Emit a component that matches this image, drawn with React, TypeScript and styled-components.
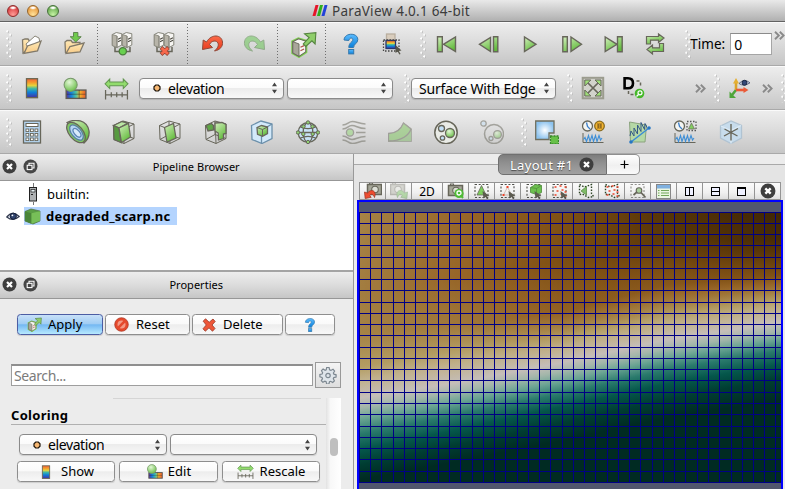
import React from 'react';
import styled, { createGlobalStyle, css } from 'styled-components';

const Global = createGlobalStyle`
  html, body { margin: 0; padding: 0; overflow: hidden; }
  body { font-family: "Noto Sans", "Open Sans", sans-serif; color: #000; }
  * { box-sizing: border-box; }
  svg { display: block; flex: none; }
`;

/* ---------- window frame ---------- */

const Window = styled.div`
  width: 785px; height: 489px; overflow: hidden;
  display: flex; flex-direction: column; background: #ececec;
`;
const TitleBar = styled.header`
  flex: none; height: 22px; display: flex; align-items: center; position: relative;
  background: linear-gradient(#e9e9e9, #cfcfcf 45%, #b0b0b0);
  border-bottom: 1px solid #626262; padding-left: 7px; gap: 8px;
`;
const Light = styled.i<{ $rim: string; $top: string; $low: string }>`
  width: 12px; height: 12px; border-radius: 50%;
  border: 1px solid ${p => p.$rim};
  background: radial-gradient(ellipse 4px 2px at 50% 18%, #fff 30%, transparent),
    radial-gradient(circle at 50% 85%, ${p => p.$low}, ${p => p.$top} 75%);
`;
const Title = styled.div`
  margin-left: 245px; display: flex; align-items: center; gap: 4px;
  font-size: 13.5px; line-height: 20px; color: #3c3c3c; white-space: nowrap; letter-spacing: 0.28px;
`;
const ToolBar = styled.div<{ $pad: number }>`
  flex: none; height: 44px; display: flex; align-items: center; padding-left: ${p => p.$pad}px;
  background: linear-gradient(#ededed, #dedede 40%, #c6c6c6);
  border-top: 1px solid #fafafa; border-bottom: 1px solid #a9a9a9; overflow: hidden;
`;
const Handle = styled.i<{ $before?: number; $after?: number }>`
  flex: none; width: 6px; height: 29px;
  margin-left: ${p => p.$before ?? 0}px; margin-right: ${p => p.$after ?? 0}px;
  background:
    radial-gradient(circle at 1.3px 1.3px, #fff .8px, transparent 1.3px) 0 0 / 6px 7.2px,
    radial-gradient(circle at 2px 2px, #bcbcbc .8px, transparent 1.4px) 0 0 / 6px 7.2px,
    radial-gradient(circle at 4.3px 4.9px, #fff .8px, transparent 1.3px) 0 0 / 6px 7.2px,
    radial-gradient(circle at 5px 5.6px, #bcbcbc .8px, transparent 1.4px) 0 0 / 6px 7.2px;
`;
const Divider = styled.i<{ $before: number; $after: number }>`
  flex: none; width: 1px; height: 41px; margin: 0 ${p => p.$after}px 0 ${p => p.$before}px;
  background: repeating-linear-gradient(#6f6f6f 0 1px, transparent 1px 3px);
`;
const Tools = styled.div<{ $w: number; $before?: number }>`
  flex: none; display: flex; margin-left: ${p => p.$before ?? 0}px;
  > span { flex: none; width: ${p => p.$w}px; display: flex; justify-content: center; }
`;
const Tool = styled.span<{ $dim?: boolean }>`
  opacity: ${p => (p.$dim ? 0.5 : 1)};
`;
const Select = styled.div<{ $w: number; $before?: number }>`
  flex: none; width: ${p => p.$w}px; height: 21px; margin-left: ${p => p.$before ?? 0}px;
  display: flex; align-items: center; padding: 0 5px 0 13px;
  border: 1px solid #8a8a8a; border-radius: 4px; box-shadow: 0 1px 1px #0002;
  background: linear-gradient(#fff, #fbfbfb 45%, #ececec 50%, #f8f8f8);
  font-size: 14px; line-height: 19px; white-space: nowrap;
  > svg:last-child { margin-left: auto; }
`;
const SelectLabel = styled.span<{ $before?: number; $clip?: number; $spacing?: number }>`
  margin-left: ${p => p.$before ?? 0}px; overflow: hidden;
  letter-spacing: ${p => p.$spacing ?? -0.4}px;
  ${p => p.$clip && css`width: ${p.$clip}px;`}
`;
const TimeLabel = styled.span`
  flex: none; font-size: 13.5px; width: 40px; white-space: nowrap; letter-spacing: 0.05px;
`;
const TimeField = styled.div`
  flex: none; width: 42px; height: 22px; border: 1px solid #a5a5a5; border-top-color: #8b8b8b;
  background: #fff; font-size: 14px; line-height: 21px; padding-left: 3px;
`;
const More = styled.span<{ $before: number; $up?: number }>`
  flex: none; margin-left: ${p => p.$before}px; padding-bottom: ${p => p.$up ?? 0}px;
`;

/* ---------- body ---------- */

const Body = styled.main`
  flex: 1; min-height: 0; display: grid; grid-template-columns: 354px 431px;
`;
const Dock = styled.section`
  display: flex; flex-direction: column; min-height: 0;
  border-right: 1px solid #999; background: #ececec;
`;
const DockHead = styled.div`
  flex: none; height: 27px; display: flex; align-items: center; gap: 6px; padding: 0 0 2px 1.5px;
  background: linear-gradient(#ededed, #dcdcdc 50%, #c6c6c6);
  border-bottom: 1px solid #979797;
`;
const DockTitle = styled.div`
  flex: 1; text-align: center; font-size: 11px; line-height: 16px; padding: 2px 4px 0 0; letter-spacing: 0.02px;
`;
const Tree = styled.div`
  flex: none; height: 91px; background: #fff; border-bottom: 2px solid #a4a4a4; padding-top: 2px;
`;
const TreeRow = styled.div`
  height: 22px; display: flex; align-items: center; font-size: 13px;
`;
const EyeCell = styled.span`
  width: 24px; display: flex; justify-content: flex-end; padding-right: 4px;
`;
const NodeLabel = styled.span<{ $on?: boolean }>`
  display: flex; align-items: center; height: 18px; line-height: 18px; gap: 5px; padding-right: 7px;
  ${p => p.$on && css`background: #b4d4fe; font-weight: 700; letter-spacing: 0.2px;`}
`;
const Panel = styled.div`
  flex: 1; min-height: 0; display: flex; flex-direction: column;
`;
const Buttons = styled.div<{ $top: number; $left: number; $gap?: number }>`
  flex: none; display: flex; gap: ${p => p.$gap ?? 3}px; margin: ${p => p.$top}px 0 0 ${p => p.$left}px;
`;
const Button = styled.button<{ $w: number; $primary?: boolean; $gap?: number; $pad?: number }>`
  all: unset; box-sizing: border-box; width: ${p => p.$w}px; height: 21px; flex: none;
  display: flex; align-items: center; gap: ${p => p.$gap ?? 5}px;
  justify-content: ${p => (p.$pad ? 'flex-start' : 'center')}; padding-left: ${p => p.$pad ?? 0}px;
  font-size: 13px; line-height: 19px; border-radius: 3.5px; white-space: nowrap;
  border: 1px solid ${p => (p.$primary ? '#4c5da3' : '#8e8e8e')};
  box-shadow: 0 1px 1px #0002;
  background: ${p => p.$primary
    ? 'linear-gradient(#c8e1f8, #a1cdf4 45%, #74b8f2 52%, #b8eaff)'
    : 'linear-gradient(#fff, #fafafa 45%, #ededed 52%, #f8f8f8)'};
`;
const SearchRow = styled.div`
  flex: none; display: flex; margin: 27px 0 0 11px; align-items: center;
`;
const SearchBox = styled.div`
  width: 302px; height: 22px; border: 1px solid #9e9e9e; border-top: 2px solid #8f8f8f;
  background: #fff; color: #7b7b7b; font-size: 14px; line-height: 20px; padding-left: 2px; letter-spacing: -0.4px;
`;
const GearButton = styled.div`
  width: 26px; height: 26px; margin-left: 2px; border: 1px solid #999;
  background: linear-gradient(#f4f4f4, #dedede); display: flex; align-items: center; justify-content: center;
`;
const Scroller = styled.div`
  flex: 1; min-height: 0; display: flex; margin-top: 10px; padding-left: 11px;
`;
const Fields = styled.div`
  width: 315px;
`;
const Rule = styled.div`
  height: 1px; background: #d5d5d5; margin: 0 5px 0 102px;
`;
const Heading = styled.h3`
  margin: 8px 0 0; font-size: 13px; line-height: 17px; font-weight: 700; border-bottom: 1px solid #b0b0b0;
  letter-spacing: 0.3px;
`;
const Track = styled.div`
  width: 15px; background: linear-gradient(90deg, #e2e2e2, #f8f8f8 30%, #fff);
  display: flex; justify-content: center; padding-top: 40px;
`;
const Thumb = styled.div`
  width: 8px; height: 18px; border-radius: 4px; background: #bfbfbf;
`;

/* ---------- render view ---------- */

const ViewArea = styled.section`
  display: flex; flex-direction: column; background: #ececec; min-height: 0;
`;
const TabStrip = styled.div`
  flex: none; height: 21px; display: flex; align-items: flex-start; padding-left: 144px;
  background: linear-gradient(#a9a9a9, #a9a9a9) 0 10px / 100% 1px no-repeat,
    linear-gradient(#ececec 0 10px, #e4e4e4 10px);
`;
const Tab = styled.div`
  width: 109px; height: 21px; display: flex; align-items: center; justify-content: space-between;
  padding: 0 12px 0 11px; color: #fff; font-size: 13px; border-radius: 5px 0 0 5px; letter-spacing: 0.3px;
  white-space: nowrap; text-shadow: 0 1px 1px #0008;
  background: linear-gradient(#7d7d7d, #8f8f8f 40%, #a1a1a1); border: 1px solid #707070;
`;
const AddTab = styled.div`
  width: 33px; height: 21px; border: 1px solid #8f8f8f; border-left: 0; border-radius: 0 5px 5px 0;
  background: linear-gradient(#fff, #f0f0f0 55%, #fafafa); padding-left: 2px;
  display: flex; align-items: center; justify-content: center;
`;
const ViewBar = styled.div`
  flex: none; height: 25px; padding: 7px 0 0 5px; display: flex; background: #e4e4e4;
`;
const ViewTool = styled.div<{ $w?: number }>`
  flex: none; width: ${p => p.$w ?? 26}px; height: 18px; overflow: hidden;
  display: flex; align-items: center; justify-content: center; font-size: 12px;
  background: linear-gradient(#fbfbfb, #f0f0f0 60%, #dedede);
  border: 1px solid #949494; border-left-width: 0; border-right-width: 1px;
  &:first-child { border-left-width: 1px; width: 27px; }
`;
const Dim = styled.span`opacity: 0.4;`;
const Viewport = styled.div`
  flex: 1; min-height: 0; margin: 0 2px 0 3px; border: 2px solid #0000ff; border-bottom: 0;
  background: #52576e; padding-top: 10px; overflow: hidden;
`;

/* ---------- elevation field ---------- */

const PALETTE = [
  [0, 43, 34], [0, 61, 50], [5, 87, 75], [42, 122, 108], [107, 164, 147], [163, 182, 170], [197, 190, 185],
  [192, 176, 138], [179, 156, 98], [163, 125, 64], [150, 100, 38], [127, 80, 20], [92, 56, 8], [64, 38, 4],
];
const PROFILES: { x: number; knots: [number, number][] }[] = [
  { x: 359, knots: [[213, 8.8], [290, 9], [335, 8.8], [367, 8], [380, 7], [398, 6], [408, 5], [419, 4], [434, 3], [450, 2], [465, 1], [480, 0]] },
  { x: 455, knots: [[213, 9.8], [280, 9.9], [325, 9.2], [350, 8], [364, 7], [383, 6], [392, 5], [402, 4], [415, 3], [430, 2], [445, 1], [462, 0]] },
  { x: 565, knots: [[213, 11], [260, 11.1], [312, 10.2], [333, 8.4], [345, 7.2], [362, 6], [371, 5], [381, 4], [393, 3], [406, 2], [422, 1], [440, 0]] },
  { x: 665, knots: [[213, 12.2], [240, 12], [285, 10.6], [310, 8.5], [322, 7.3], [340, 6], [349, 5], [358, 4], [370, 3], [384, 2], [400, 1], [418, 0]] },
  { x: 782, knots: [[213, 13], [240, 12.7], [275, 11], [295, 8.5], [306, 7.3], [322, 6], [331, 5], [339, 4], [350, 3], [364, 2], [378, 1], [400, 0]] },
];
const LINES_X = [359, 370, 381, 393, 404, 415, 427, 438, 449, 460, 472, 483, 494, 505, 517, 528, 539, 550, 562,
  573, 584, 595, 607, 618, 629, 640, 652, 663, 674, 685, 697, 708, 719, 731, 742, 753, 764, 775];
const LINES_Y = [212, 223, 234, 245, 257, 268, 279, 290, 302, 313, 324, 335, 347, 358, 369, 380, 392, 403, 414,
  426, 437, 448, 459, 471, 482];

const shade = (t: number) => {
  const v = Math.max(0, Math.min(PALETTE.length - 1.001, t));
  const i = Math.floor(v);
  const f = v - i;
  return `rgb(${PALETTE[i].map((c, k) => Math.round(c + (PALETTE[i + 1][k] - c) * f)).join(',')})`;
};
const sample = (x: number) => {
  let i = 0;
  while (i < PROFILES.length - 2 && x > PROFILES[i + 1].x) i++;
  const a = PROFILES[i];
  const b = PROFILES[i + 1];
  const f = (x - a.x) / (b.x - a.x);
  return a.knots.map((k, n) => [k[0] + (b.knots[n][0] - k[0]) * f, k[1] + (b.knots[n][1] - k[1]) * f]);
};
const stopsFor = (x: number) => {
  const k = sample(x);
  const out: [number, string][] = [];
  k.forEach(([y, t], n) => {
    out.push([y, shade(t)]);
    if (n < k.length - 1) {
      for (let s = 1; s < 3; s++) out.push([y + ((k[n + 1][0] - y) * s) / 3, shade(t + ((k[n + 1][1] - t) * s) / 3)]);
    }
  });
  return out;
};
const STRIPS = Array.from({ length: 211 }, (_, i) => 359 + i * 2);

const ElevationMesh = () => (
  <svg width="422" height="271" viewBox="359 212 422 271" shapeRendering="crispEdges">
    <defs>
      {STRIPS.map(x => (
        <linearGradient key={x} id={`s${x}`} gradientUnits="userSpaceOnUse" x1="0" x2="0" y1="212" y2="483">
          {stopsFor(x + 1).map(([y, c], n) => <stop key={n} offset={(y - 212) / 271} stopColor={c} />)}
        </linearGradient>
      ))}
    </defs>
    {STRIPS.map(x => <rect key={x} x={x} y="212" width="2" height="271" fill={`url(#s${x})`} />)}
    {LINES_X.map(x => <rect key={x} x={x} y="212" width="1" height="271" fill="#000084" />)}
    {LINES_Y.map(y => <rect key={y} x="359" y={y} width="422" height="1" fill="#000084" />)}
  </svg>
);

/* ---------- icons ---------- */

const INK = '#67665a';
const Ico = ({ s = 24, children }: { s?: number; children: React.ReactNode }) => (
  <svg width={s} height={s} viewBox="0 0 24 24" fill="none" strokeWidth="1.3" stroke={INK}>{children}</svg>
);
const Defs = () => (
  <svg width="0" height="0">
    <defs>
      <linearGradient id="green" x1="0" y1="0" x2="0.6" y2="1"><stop offset="0" stopColor="#d5f0c0" /><stop offset="1" stopColor="#62bb3c" /></linearGradient>
      <linearGradient id="folder" x1="0" y1="0" x2="0" y2="1"><stop offset="0" stopColor="#ffe9b6" /><stop offset="1" stopColor="#f7ca86" /></linearGradient>
      <linearGradient id="rain" x1="0" y1="0" x2="0" y2="1">
        <stop offset="0" stopColor="#f0603a" /><stop offset=".2" stopColor="#f59b2d" /><stop offset=".36" stopColor="#e5d43c" />
        <stop offset=".52" stopColor="#3fb9a5" /><stop offset=".72" stopColor="#0e7fd8" /><stop offset="1" stopColor="#4a2f9e" />
      </linearGradient>
      <linearGradient id="rainH" x1="0" y1="0" x2="1" y2="0">
        <stop offset="0" stopColor="#5b2d96" /><stop offset=".25" stopColor="#1180e0" /><stop offset=".5" stopColor="#4ec3a0" />
        <stop offset=".7" stopColor="#f2b12c" /><stop offset="1" stopColor="#e8552a" />
      </linearGradient>
      <radialGradient id="ball" cx=".4" cy=".3" r=".7"><stop offset="0" stopColor="#e3f7d6" /><stop offset="1" stopColor="#6cbf4c" /></radialGradient>
      <linearGradient id="blue" x1="0" y1="0" x2="0" y2="1"><stop offset="0" stopColor="#5cbcff" /><stop offset="1" stopColor="#0a7fd9" /></linearGradient>
      <radialGradient id="sky"><stop offset="0" stopColor="#fff" /><stop offset="1" stopColor="#8dc3ee" /></radialGradient>
      <linearGradient id="red" x1="0" y1="0" x2="0" y2="1"><stop offset="0" stopColor="#fb6a49" /><stop offset="1" stopColor="#e6381a" /></linearGradient>
    </defs>
  </svg>
);

const OpenFile = () => (
  <Ico>
    <path d="M3 21 2.500 8 5 7h3l1.500 2L16 9v4z" fill="url(#folder)" stroke="#80796a" />
    <path d="m6 12 9-8 4 2 1 5-12 5z" fill="#fff" stroke="#8a8678" strokeWidth="1" />
    <path d="M4 21.500 7.500 14l7-2.500 6.500-2.500-3.500 10z" fill="url(#folder)" stroke="#80796a" />
  </Ico>
);
const SaveFile = () => (
  <Ico>
    <path d="M3.500 21 3 10l2-1.500h4l1.500 2H18v5" fill="url(#folder)" stroke="#80796a" />
    <path d="M4 21.500 8 14.500l14-3.500-4 9z" fill="url(#folder)" stroke="#80796a" />
    <path d="M11.500.5h4.400v4.200h3.300L13.700 10 8.200 4.700h3.300z" fill="#6fca4c" stroke="#577d46" strokeWidth=".9" />
  </Ico>
);
const Towers = () => (
  <>
    {[2, 12].map(x => (
      <g key={x} transform={`translate(${x} 0)`} strokeWidth=".9">
        <path d="m.3 2.500 4-2 5.500 1.200v11.300l-4.800 2.500-4.700-2z" fill="#f6f5f2" stroke="#7b7a6f" />
        <path d="m.3 2.500 4.700 1.500v11.500l-4.700-2z" fill="#b7b4a9" stroke="#8a897e" />
        <path d="m6 7.200 3-1.500m-3 4 3-1.500" stroke="#4c4b43" strokeWidth="1.100" />
        <path d="M5 4v11.500" stroke="#85847a" />
      </g>
    ))}
  </>
);
const Connect = () => (
  <Ico><path d="M5 15v4.500h15V15" strokeWidth="1.500" /><Towers /><circle cx="12.800" cy="19.300" r="3.600" fill="#68d04f" stroke="#4c7c3d" /></Ico>
);
const Disconnect = () => (
  <Ico>
    <path d="M5 15v4.500h15V15" strokeWidth="1.500" /><Towers />
    <path d="m9 15.500 7.500 7m0-7-7.500 7" stroke="#8d4234" strokeWidth="4" /><path d="m9.500 16 6.500 6m0-6-6.500 6" stroke="#f8684c" strokeWidth="2.700" />
  </Ico>
);
const Undo = ({ fill = 'url(#red)', ink = '#8f4a3a' }: { fill?: string; ink?: string }) => (
  <Ico>
    <path d="M2.200 8 1.500 17.500 11.500 15.500 8.500 12.500C10.500 8.500 15.500 7.800 17 11.200c1 2.800-.8 5.300-3.500 7.800 5.500-1 8.500-4.500 8-9C20.700 2.500 10.500 1.500 5.500 10z" fill={fill} stroke={ink} strokeWidth="1" />
  </Ico>
);
const Flip = styled.span`display: block; transform: scaleX(-1);`;
const ApplyServer = ({ s = 27 }: { s?: number }) => (
  <Ico s={s}>
    <path d="m2.500 9.500 5-2.500 6.500 2v9.500l-6 4-5.500-3z" fill="#fff" stroke="#7fd04f" strokeWidth="2.800" />
    <path d="m2.500 9.500 5-2.500 6.500 2v9.500l-6 4-5.500-3z" fill="#f6f5f2" strokeWidth=".9" />
    <path d="m2.500 9.500 5.500 2v11l-5.500-3z" fill="#a9a69a" strokeWidth=".8" />
    <path d="m9.300 14.500 3.200-1.500m-3.200 4.500 3.200-1.500" stroke="#b05048" strokeWidth="1.100" />
    <path d="m13 2.500 10-1-.7 10-2.800-2.800-5.500 5-2.200-2.200 5.200-5.700z" fill="#8fce6a" stroke="#55843f" strokeWidth="1" />
  </Ico>
);
const Help = ({ s = 24 }: { s?: number }) => (
  <Ico s={s}>
    <path d="M5 8C5.300.500 18.800.300 18.800 7.500c0 4.200-4.200 4.200-4.200 8h-4.800c0-5 4-5.500 4-7.800 0-2.400-3.500-2.300-4 .8z" fill="url(#blue)" stroke="#3578ac" strokeWidth="1" />
    <rect x="9.700" y="17.500" width="5" height="4.400" fill="url(#blue)" stroke="#3578ac" strokeWidth="1" />
  </Ico>
);
const PickColor = () => (
  <Ico>
    <rect x="5.500" y="2" width="8.500" height="6" fill="#d9cdbd" stroke="#b9ae9f" />
    <rect x="5" y="8.500" width="9.500" height="8" fill="url(#rain)" stroke="#28356c" />
    <rect x="2.500" y="8" width="15.500" height="11" stroke="#444" strokeDasharray="1.500 1.500" />
    <path d="m14.500 13 6 5.500-2.600.4 1.700 3-1.300.7-1.600-3.200-2.200 1.500z" fill="#56554a" stroke="none" />
  </Ico>
);
type Shape = { d: string };
const Green = ({ d }: Shape) => <Ico><path d={d} fill="url(#green)" strokeWidth="1.400" /></Ico>;
const PLAY = 'M6.500 5v14.500L18 12.300z';
const FIRST = 'M2.500 4.700h4.800v15H2.500zM20.500 5v14.500L8.500 12.300z';
const PREV = 'M16.500 4.700h4.300v15h-4.300zM13.500 5.500v14L2.500 12.300z';
const NEXT = 'M2.800 4.700h4.500v15H2.800zM11 5v14.500L21.500 12.300z';
const LAST = 'M3.200 5v14.500L15 12.300zM15.500 4.700h4.700v15h-4.700z';
const Loop = () => (
  <Ico>
    <path d="M3.500 12V4.500h12V2l5.500 4-5.500 4.500V8.200h-8V12z" fill="url(#green)" strokeWidth="1.200" />
    <path d="M20.500 11.500v8h-11V22L4 17.500l5.500-4.500v2.800h7v-4.300z" fill="url(#green)" strokeWidth="1.200" />
  </Ico>
);
const ColorBar = ({ s = 24 }: { s?: number }) => <Ico s={s}><rect x="6.500" y="2.700" width="11" height="19" fill="url(#rain)" stroke="#6b6650" /></Ico>;
const EditMap = ({ s = 25 }: { s?: number }) => (
  <Ico s={s}>
    <rect x="4" y="13.500" width="19" height="8" fill="url(#rainH)" stroke="#5d5b55" />
    <path d="M4.500 17.500h18m-6 4v-8" stroke="#22222288" strokeWidth=".8" />
    <circle cx="8.300" cy="8.500" r="6.300" fill="url(#ball)" stroke="#77976a" strokeWidth="1" />
  </Ico>
);
const Rescale = ({ s = 25 }: { s?: number }) => (
  <Ico s={s}>
    <path d="m1 7.500 4.500-4.500v2.700h13V3L23 7.500 18.500 12V9.300h-13V12z" fill="#92dc6d" stroke="#629650" strokeWidth="1" />
    <path d="M1.500 13.500v9m21-9v9M1.500 18h21M7 15.500v5m5.200-5v5m5.200-5v5" strokeWidth="1.200" />
  </Ico>
);
const Extents = () => (
  <Ico>
    <rect x="1.700" y="1.800" width="20.500" height="20.500" fill="#d2d3cb" strokeWidth="2" stroke="#9b9c8e" />
    <path d="m7 7 10 10m0-10L7 17" strokeWidth="1.700" />
    <path d="M3.800 4v6l6-6zM20 4v6l-6-6zM3.800 20v-6l6 6zM20 20v-6l-6 6z" fill="#9fe078" strokeWidth="1" />
  </Ico>
);
const ZoomData = () => (
  <svg width="24" height="24" viewBox="0 0 24 24" fill="none">
    <path d="M2.600 2.300H6c4 0 5 2.500 5 5s-1 5-5 5H2.600z" stroke="#000" strokeWidth="2.600" />
    <path d="M6.500 15v3.500h5m3-13.500h4v5" stroke={INK} strokeWidth="1.500" strokeDasharray="3 2.500" />
    <circle cx="17.500" cy="17.500" r="4.800" fill="#45b829" />
    <circle cx="18" cy="16.800" r="2" stroke="#fff" strokeWidth="1.200" /><path d="m16.500 18.500-2 2" stroke="#fff" strokeWidth="1.300" />
  </svg>
);
const Axes = () => (
  <Ico>
    <path d="m8 14-4 5" stroke="#4fa53a" strokeWidth="2.600" /><path d="M1.500 15.500V22H8z" fill="#4fa53a" stroke="none" />
    <path d="M8 14V6" stroke="#d9a42c" strokeWidth="2.600" /><path d="M8 2 5 7.500h6z" fill="#e5b033" stroke="none" />
    <path d="M8 14h8" stroke="#ea5a38" strokeWidth="2.600" /><path d="m20.500 14-5-3v6z" fill="#ea5a38" stroke="none" />
    <path d="M11 7.500Q16 2 22 6.800 16 11 11 7.500z" fill="#dfe6f2" stroke="#5a6480" strokeWidth="1" /><circle cx="16.500" cy="6.800" r="2.500" fill="#334878" stroke="#1d2742" strokeWidth="1" />
  </Ico>
);
const Calc = () => (
  <Ico>
    <rect x="3.500" y="1" width="17" height="22" fill="#b4d4f0" /><rect x="6" y="3.500" width="12" height="3" fill="#fff" strokeWidth="1" />
    {[0, 1, 2].map(r => [0, 1, 2].map(c => <rect key={`${r}${c}`} x={6 + c * 4.500} y={9 + r * 4.500} width="2.800" height="2.600" fill="#fff" strokeWidth=".9" />))}
  </Ico>
);
const Contour = () => (
  <Ico>
    <path d="M1 2.500C9-1.500 21-.5 23 11c.6 5-1.500 9-5 12z" fill="url(#green)" />
    <ellipse cx="10" cy="12.500" rx="12" ry="6.800" transform="rotate(50 10 12.500)" fill="#80c864" />
    <ellipse cx="10.500" cy="12.500" rx="9" ry="4.800" transform="rotate(50 10.500 12.500)" fill="#b5d5f3" stroke="#5980a0" />
    <ellipse cx="11" cy="12.800" rx="5.200" ry="2.600" transform="rotate(50 11 12.800)" fill="#d9eafa" stroke="#5d86b5" />
  </Ico>
);
const WireCube = () => (
  <path d="m1.500 5.500 9.500-4.500 11 3v14.500L12 23.500l-10-4zM1.500 5.500l10 4 10.500-5.500M11.500 9.500 12 23.500M11 1v13.500l-9 5m9-5 11 4" strokeWidth="1" />
);
const Clip = () => (
  <Ico>
    <WireCube /><path d="M1.500 5.500 10 1.500l6 1.500-9 5z" fill="#b9e5a3" />
    <path d="m1.500 5.500 5.500 2.500 2 14.500-7-3z" fill="#579b40" /><path d="M7 8 16.500 3.500 18.500 17l-9 5.500z" fill="url(#green)" />
  </Ico>
);
const Slice = () => (<Ico><WireCube /><path d="m6.500 7.500 9-4 2.500 14.500-9 4z" fill="url(#green)" /></Ico>);
const Threshold = () => (
  <Ico><WireCube /><path d="m2 5.500 5.500-2 2 2v4.500L4 11z" fill="#5fa647" /><path d="m11 3 7-.5 4 2v9l-2.500.5v4.500L14.500 20l-.3-7-3.200-2z" fill="url(#green)" /></Ico>
);
const ExtractSubset = () => (
  <Ico>
    <path d="m1.500 5.500 9.500-4.500 11 3v14.500L12 23.500l-10-4z" fill="#d3e9fa" stroke="#6c90ab" />
    <path d="M11.500 14v9.500M22 4l-5 3" stroke="#6c90ab" />
    <path d="m7 7.500 4.500-2 6 1.500v6.500l-5 2.800-5-2z" fill="url(#green)" /><path d="m7 7.500 5.500 2 5-2.500m-5 2.500v6.700" strokeWidth="1" />
  </Ico>
);
const Glyph = () => (
  <Ico>
    <circle cx="12" cy="12.500" r="9.800" fill="#c8e2f6" />
    <ellipse cx="12" cy="12.500" rx="4.800" ry="9.800" /><path d="M2.200 12.500h19.600M4.500 7c4 2.200 11 2.200 15 0m-15 11c4-2.200 11-2.200 15 0" />
    {[[12, 2.5], [12, 22], [2, 12.5], [22, 12.5], [7.3, 14], [16.7, 14], [7.5, 6.5], [16.5, 6.5]].map(([x, y]) =>
      <circle key={`${x}-${y}`} cx={x} cy={y} r="1.700" fill="#8fd572" strokeWidth="1" />)}
  </Ico>
);
const Stream = () => (
  <Ico>
    <path d="M.5 5c5.500 0 5.500-3.500 10-3.500S17 4 23.500 4M.5 9c5.500 0 5-3.500 9.500-3.500s6 3 13.500 3M14 12.500h9.500M.5 16c5.500 0 5 3.500 9.500 3.500s6-3 13.500-3M.5 20c5.500 0 5.500 3.500 10 3.500S17 21 23.500 21" strokeWidth="1.500" />
    <circle cx="8" cy="12.500" r="3.600" fill="#8fd572" />
  </Ico>
);
const Warp = () => (
  <Ico><path d="M.5 13.500C8 13.500 13 9 15.500 3l8 6v12.500H.5z" fill="#7fba68" strokeWidth=".7" /><path d="M.5 13.500C8 13.500 13 9 15.500 3l7.500 6c-2 6-9 12-22.500 12z" fill="#7cc55b" /></Ico>
);
const Group = () => (
  <Ico>
    <circle cx="12" cy="12.500" r="11.200" fill="#e9ebe6" strokeWidth="1.500" /><circle cx="7.500" cy="8.500" r="3" fill="#c4e0f6" />
    <circle cx="8.500" cy="18" r="2.200" fill="#c4e0f6" /><circle cx="16" cy="13" r="4.500" fill="url(#ball)" />
  </Ico>
);
const ExtractGroup = () => (
  <Ico>
    <circle cx="14" cy="14" r="9.500" strokeWidth="1.500" /><circle cx="3.500" cy="3.500" r="2.700" fill="#c4e0f6" />
    <circle cx="11" cy="18.500" r="2" fill="#c4e0f6" /><circle cx="17.500" cy="14.500" r="3.900" fill="url(#ball)" />
  </Ico>
);
const SelectBlock = () => (
  <Ico>
    <path d="M.7 1H19v12h-5v6.500H.7z" fill="url(#sky)" stroke="#6f6e5d" /><rect x="15.500" y="16" width="8" height="8" fill="#67c048" stroke="#39882a" strokeDasharray="2 1" />
  </Ico>
);
const Wave = () => <path d="m2.500 19.500 1.500-2 1.500 4 2-6 1.500 6 2-6 1.500 6 2-6 1.500 6 2-6 1.500 4.500 1.500-2" stroke="#3f8fd6" strokeWidth="1.100" />;
const Clock = () => (<><circle cx="6.500" cy="6" r="5" fill="#f4f5f2" /><path d="m5.500 2.500 1 4 2.500 2.500" stroke="#3b7fca" /></>);
const PlotOverTime = () => (
  <Ico>
    <Clock /><circle cx="18.500" cy="6" r="4.800" fill="#f4b42f" stroke="#8a6d22" /><path d="M16 4h5m-5 2h5m-5 2h5m-3.700-4v4m2.500-4v4" stroke="#76551a" strokeWidth=".8" />
    <path d="M2 13v9.500h20.500" strokeWidth="1" /><Wave />
  </Ico>
);
const PlotLine = () => (
  <Ico>
    <path d="m2.500 2 17 3-1.500 17H3.500z" fill="#b5d8a6" stroke="#8ba37e" strokeWidth="1" />
    <path d="m3 16 1-5 3 5 0-8 3.500 6 0-9 3.500 6.500 0-9 3.500 7 .5-6 2 4" stroke="#355a88" strokeWidth="1" /><path d="M4 22 22 8" stroke="#3b8bd6" strokeWidth="1.500" />
    <circle cx="4" cy="22" r="1.800" fill="#2577c4" stroke="none" /><circle cx="22" cy="8" r="1.800" fill="#2577c4" stroke="none" />
  </Ico>
);
const PlotSelection = () => (
  <Ico>
    <Clock /><rect x="14" y="1.500" width="9" height="9" strokeDasharray="1.500 1.500" stroke="#555" /><path d="m18.500 3 3 6h-6z" fill="#83cf60" strokeWidth=".7" />
    <path d="M2 13v9.500h20.500" strokeWidth="1" /><Wave />
  </Ico>
);
const Probe = () => (
  <Ico>
    <path d="m1.500 6 10.500-5 10.500 4.500V18L12 23.500 1.500 18z" fill="#c7dcec" stroke="#b0c3d2" /><path d="m2 6 10 4.500 10-5M12 10.500v13" stroke="#dceaf5" />
    <path d="M12 4v16.500M5.500 9l13 7M19 8.500 5 16" strokeWidth="1.400" />
  </Ico>
);
const Chevrons = () => (
  <svg width="11" height="9" viewBox="0 0 11 9" fill="none" stroke="#8a8a8a" strokeWidth="1.900"><path d="m1 .8 3.800 3.700L1 8.200M5.800.8l3.800 3.700-3.800 3.700" /></svg>
);
const Arrows = () => (
  <svg width="7" height="12" viewBox="0 0 7 12" fill="#444"><path d="M3.500.5 6 4.300H1zM3.500 11.500 1 7.700h5z" /></svg>
);
const Point = () => (
  <svg width="8" height="8" viewBox="0 0 8 8" fill="#f7b873" stroke="#1b1208" strokeWidth="1.200"><path d="M2.700 1h2.600L7 2.800v2.400L5.300 7H2.700L1 5.200V2.800z" /></svg>
);
const CloseDot = ({ s = 15 }: { s?: number }) => (
  <svg width={s} height={s} viewBox="0 0 15 15"><circle cx="7.500" cy="7.500" r="7" fill="#3e3e3e" /><path d="m5 5 5 5m0-5-5 5" stroke="#fff" strokeWidth="2.200" /></svg>
);
const FloatDot = () => (
  <svg width="15" height="15" viewBox="0 0 15 15" fill="none"><circle cx="7.500" cy="7.500" r="7" fill="#464646" /><path d="M6 6V4.200h5V9H9.300" stroke="#fff" strokeWidth="1.100" /><rect x="4.200" y="6.300" width="4.800" height="4.300" stroke="#fff" strokeWidth="1.100" /></svg>
);
const Logo = () => (
  <svg width="16" height="11" viewBox="0 0 16 11"><path d="M3.500 0h3L3.500 11h-3z" fill="#e6152a" /><path d="M8 0h3L8 11H5z" fill="#2fae1e" /><path d="M12.500 0h3l-3 11h-3z" fill="#2343d8" /></svg>
);
const Tower = () => (
  <svg width="18" height="22" viewBox="0 0 18 22"><path d="M9.500 0v4M9.500 19v3" stroke="#777" /><rect x="5.500" y="4.500" width="7" height="13.500" fill="#aeb1b3" stroke="#222" /><rect x="7" y="6.500" width="4" height="2.500" fill="#e9f2f5" stroke="#222" strokeWidth=".7" /><path d="M7 11.500h2" stroke="#222" /></svg>
);
const Cube = () => (
  <svg width="17" height="17" viewBox="0 0 17 17"><path d="m1 3.500 6-2.500 9 2v10l-7 3-8-3z" fill="#5a9e45" stroke="#4a6c3c" strokeWidth=".7" /><path d="m1 3.500 6.500 1.800v10.500L1 13z" fill="#4a8539" /><path d="m7.500 5.300 8.500-2v9.500l-8.500 3z" fill="#77bf58" /></svg>
);
const Eye = () => (
  <svg width="14" height="11" viewBox="0 0 14 11"><path d="M.8 6Q6.500-1 13.200 5.500 7 11 .8 6z" fill="#e8edf6" stroke="#333b50" strokeWidth="1.200" /><circle cx="7.300" cy="5.200" r="3.100" fill="#31456f" stroke="#151e37" /><circle cx="6.400" cy="4.300" r=".9" fill="#fff" /></svg>
);
const Forbid = () => (
  <svg width="15" height="15" viewBox="0 0 15 15" fill="none"><circle cx="7.500" cy="7.500" r="6.800" fill="#e5492c" stroke="#a9311e" strokeWidth=".7" /><circle cx="7.500" cy="7.500" r="4" fill="#f39a86" /><path d="m4.200 10.800 6.600-6.600" stroke="#e5492c" strokeWidth="2.600" /></svg>
);
const RedX = () => (
  <svg width="14" height="14" viewBox="0 0 14 14"><path d="m3.500.8 3.700 3.500L11 1l2.200 2.500L10 7l3 3.500-2.500 2.700L7 9.800l-3.700 3.400L1 10.800 4.300 7 1.200 3.200z" fill="#ee5638" stroke="#a24130" strokeWidth=".9" /></svg>
);
const Gear = () => (
  <svg width="18" height="18" viewBox="0 0 18 18" fill="#dfe5ea" stroke="#7c8790" strokeWidth="1.200">
    <path d="m7.700 1.500 2.400 0 .5 2.300 1.300.6 2.100-1.200 1.600 1.800-1.200 2 .5 1.200 2.200.6v2.300l-2.300.5-.5 1.200 1.100 2-1.700 1.700-2-1.200-1.200.5-.6 2.200H7.600l-.5-2.300-1.200-.5-2 1.100-1.600-1.700 1.200-2L3 11.400.9 10.800V8.500L3.100 8l.5-1.300-1.100-2 1.600-1.700 2 1.300 1.100-.5z" /><circle cx="9" cy="9.500" r="2.200" />
  </svg>
);
const VIco = ({ children }: { children: React.ReactNode }) => (
  <svg width="18" height="16" viewBox="0 0 17 16" fill="none" stroke={INK} strokeWidth="1.100">{children}</svg>
);
const Camera = () => (<><rect x="1" y="2.500" width="14" height="10" fill="#a5a698" strokeWidth="1.500" /><path d="M3 2.500V1h3v1.500" /><circle cx="8.500" cy="7.500" r="3.300" fill="#dddfd6" /></>);
const CameraUndo = () => (<VIco><g transform="translate(2 -1)"><Camera /></g><path d="m0 9 .7 6.500 6-1.200-1.500-1.800c2-2 3.300-1.500 4.800 2C12.500 8 7 5 3 10z" fill="#ee4d30" stroke="#a33b28" strokeWidth=".8" /></VIco>);
const CameraRedo = () => (<VIco><g transform="translate(-1 -1)"><Camera /></g><path d="m17 9-.7 6.500-6-1.200 1.500-1.800c-2-2-3.300-1.500-4.800 2C4.500 8 10 5 14 10z" fill="#62b745" stroke="#3f7a2e" strokeWidth=".8" /></VIco>);
const CameraZoom = () => (<VIco><Camera /><circle cx="11.500" cy="10.500" r="4.600" fill="#4fbb35" stroke="none" /><circle cx="11.500" cy="10" r="2" stroke="#fff" strokeWidth="1.300" /><path d="m13 12 2.500 3" stroke="#4fbb35" strokeWidth="2" /></VIco>);
const Box = () => <rect x="1.500" y="1.500" width="13" height="13" stroke="#4d4d48" strokeDasharray="2 1.700" />;
const Cursor = () => <path d="m9 8 7 5-2.600.6L15 16l-1.500.5-1.300-2.500L10 15.500z" fill="#5c5b50" stroke="none" />;
const Poly = () => <path d="m2 1.500 5 2.500 7-2.500v9l2 3-5 1-6-3.500-3 .5z" stroke="#2d4225" strokeWidth="1.400" strokeDasharray="1.500 1.500" />;
const RedDots = () => <path d="M3 4h2m3-1h2m3 1h2M5 8h2m3-1h2M3 12h2m4-1h2m2-2h2m-2 4h2" stroke="#ee4328" strokeWidth="1.600" />;
const SelCells = () => <VIco><Box /><path d="M8 2.500 12.500 12h-9z" fill="#7bcf58" strokeWidth=".8" /><Cursor /></VIco>;
const SelPoints = () => <VIco><Box /><path d="m8 4-4 8h8z" stroke="#c9a99c" strokeWidth=".8" /><path d="M7 4h2m-6 8h2m6 0h2" stroke="#ee4328" strokeWidth="2" /><Cursor /></VIco>;
const FrustumCells = () => <VIco><Box /><path d="m5 4.500 5-3 6 1v7l-5 2-6-2z" fill="#6cc04d" stroke="#4d8a3a" strokeWidth=".8" /><path d="m5 4.500 6 1 5-3m-5 3v6" stroke="#4d8a3a" strokeWidth=".7" /><Cursor /></VIco>;
const FrustumPoints = () => <VIco><Box /><RedDots /><Cursor /></VIco>;
const PolyCells = () => <VIco><Poly /><path d="M9 3.500V12L3.500 8z" fill="#7ebb66" stroke="#5d8a49" strokeWidth=".8" /></VIco>;
const PolyPoints = () => <VIco><Poly /><RedDots /></VIco>;
const SelBlock = () => <VIco><g opacity=".6"><Box /></g><circle cx="9.500" cy="7.500" r="2.800" fill="#a9cf9b" /><path d="m4 12 3.500-3m4 .5 4.500 5" strokeWidth="1.700" /></VIco>;
const Sheet = () => (
  <svg width="15" height="15" viewBox="0 0 15 15"><rect x=".5" y=".5" width="14" height="14" fill="#eaf5e3" stroke="#888" /><rect x="1" y="1" width="13" height="3.500" fill="#7fb0df" /><path d="M2 6.500h1.500M5 6.500h8M2 9h1.500M5 9h8M2 11.500h1.500M5 11.500h8" stroke="#71a65b" strokeWidth="1.200" /></svg>
);
const Pane = ({ d, w }: { d: string; w: number }) => (
  <svg width="9" height="9" viewBox="0 0 9 9" fill="#eef0ff" stroke="#000" shapeRendering="crispEdges"><rect x=".5" y=".5" width="8" height="8" /><path d={d} strokeWidth={w} /></svg>
);

/* ---------- application ---------- */

export default function App() {
  return (
    <Window>
      <Global />
      <TitleBar>
        <Light $rim="#8d2b2b" $top="#d93c3f" $low="#ff9d97" />
        <Light $rim="#96652a" $top="#e89a3e" $low="#ffe29a" />
        <Light $rim="#45713a" $top="#69ab50" $low="#c5f3a4" />
        <Title><Logo />ParaView 4.0.1 64-bit</Title>
        <Defs />
      </TitleBar>

      <ToolBar $pad={6}>
        <Handle $after={-1} />
        <Tools $w={42}><Tool><OpenFile /></Tool><Tool><SaveFile /></Tool></Tools>
        <Divider $before={2} $after={3} />
        <Tools $w={42}><Tool><Connect /></Tool><Tool><Disconnect /></Tool></Tools>
        <Divider $before={2} $after={4} />
        <Tools $w={41.5}><Tool><Undo /></Tool><Tool $dim><Flip><Undo fill="#5fc34a" ink="#4a7d3c" /></Flip></Tool></Tools>
        <Divider $before={2} $after={4} />
        <Tools $w={42}><Tool><ApplyServer /></Tool></Tools>
        <Divider $before={1} $after={4} />
        <Tools $w={42}><Tool><Help /></Tool><Tool><PickColor /></Tool></Tools>
        <Handle $before={6} />
        <Tools $w={41.7}>
          <Tool><Green d={FIRST} /></Tool><Tool><Green d={PREV} /></Tool><Tool><Green d={PLAY} /></Tool>
          <Tool><Green d={NEXT} /></Tool><Tool><Green d={LAST} /></Tool><Tool><Loop /></Tool>
        </Tools>
        <Handle $before={9} $after={-1} />
        <TimeLabel>Time:</TimeLabel>
        <TimeField>0</TimeField>
        <More $before={2} $up={17}><Chevrons /></More>
      </ToolBar>

      <ToolBar $pad={6}>
        <Handle $after={-1} />
        <Tools $w={42}><Tool><ColorBar /></Tool><Tool><EditMap /></Tool><Tool><Rescale /></Tool></Tools>
        <Select $w={145} $before={2}><Point /><SelectLabel $before={7}>elevation</SelectLabel><Arrows /></Select>
        <Select $w={106} $before={3}><Arrows /></Select>
        <Handle $before={11} $after={1} />
        <Select $w={145}><SelectLabel $before={-6} $clip={117} $spacing={-0.2}>Surface With Edges</SelectLabel><Arrows /></Select>
        <Handle $before={11} $after={-1} />
        <Tools $w={41}><Tool><Extents /></Tool><Tool><ZoomData /></Tool></Tools>
        <More $before={41}><Chevrons /></More>
        <Handle $before={8} $after={0} />
        <Tools $w={40}><Tool><Axes /></Tool></Tools>
        <More $before={2}><Chevrons /></More>
        <Handle $before={8} />
      </ToolBar>

      <ToolBar $pad={6}>
        <Handle $after={-3} />
        <Tools $w={46}>
          <Tool><Calc /></Tool><Tool><Contour /></Tool><Tool><Clip /></Tool><Tool><Slice /></Tool>
          <Tool><Threshold /></Tool><Tool><ExtractSubset /></Tool><Tool><Glyph /></Tool>
          <Tool $dim><Stream /></Tool><Tool $dim><Warp /></Tool><Tool><Group /></Tool><Tool $dim><ExtractGroup /></Tool>
        </Tools>
        <Handle $before={6} $after={-3} />
        <Tools $w={46}>
          <Tool><SelectBlock /></Tool><Tool><PlotOverTime /></Tool><Tool><PlotLine /></Tool>
          <Tool><PlotSelection /></Tool><Tool><Probe /></Tool>
        </Tools>
      </ToolBar>

      <Body>
        <Dock>
          <DockHead><CloseDot /><FloatDot /><DockTitle>Pipeline Browser</DockTitle></DockHead>
          <Tree>
            <TreeRow><EyeCell /><NodeLabel><Tower />builtin:</NodeLabel></TreeRow>
            <TreeRow><EyeCell><Eye /></EyeCell><NodeLabel $on><Cube />degraded_scarp.nc</NodeLabel></TreeRow>
          </Tree>
          <DockHead><CloseDot /><FloatDot /><DockTitle>Properties</DockTitle></DockHead>
          <Panel>
            <Buttons $top={15} $left={17} $gap={2}>
              <Button $w={86} $primary $gap={6} $pad={9}><ApplyServer s={15} />Apply</Button>
              <Button $w={85} $gap={7} $pad={8}><Forbid />Reset</Button>
              <Button $w={91} $gap={7} $pad={9}><RedX />Delete</Button>
              <Button $w={50}><Help s={16} /></Button>
            </Buttons>
            <SearchRow><SearchBox>Search...</SearchBox><GearButton><Gear /></GearButton></SearchRow>
            <Scroller>
              <Fields>
                <Rule />
                <Heading>Coloring</Heading>
                <Buttons $top={9} $left={8}>
                  <Select $w={148}><Point /><SelectLabel $before={7}>elevation</SelectLabel><Arrows /></Select>
                  <Select $w={147}><Arrows /></Select>
                </Buttons>
                <Buttons $top={6} $left={6} $gap={4}>
                  <Button $w={98} $gap={7}><ColorBar s={16} />Show</Button>
                  <Button $w={99}><EditMap s={17} />Edit</Button>
                  <Button $w={98} $gap={6}><Rescale s={17} />Rescale</Button>
                </Buttons>
              </Fields>
              <Track><Thumb /></Track>
            </Scroller>
          </Panel>
        </Dock>

        <ViewArea>
          <TabStrip>
            <Tab>Layout #1<CloseDot /></Tab>
            <AddTab><svg width="9" height="9" viewBox="0 0 9 9" stroke="#000" strokeWidth="1.200"><path d="M4.500.5v8M.5 4.500h8" /></svg></AddTab>
          </TabStrip>
          <ViewBar>
            <ViewTool><CameraUndo /></ViewTool>
            <ViewTool><Dim><CameraRedo /></Dim></ViewTool>
            <ViewTool $w={31}>2D</ViewTool>
            <ViewTool><CameraZoom /></ViewTool>
            <ViewTool><SelCells /></ViewTool>
            <ViewTool><SelPoints /></ViewTool>
            <ViewTool><FrustumCells /></ViewTool>
            <ViewTool><FrustumPoints /></ViewTool>
            <ViewTool><PolyCells /></ViewTool>
            <ViewTool><PolyPoints /></ViewTool>
            <ViewTool><SelBlock /></ViewTool>
            <ViewTool><Sheet /></ViewTool>
            <ViewTool><Pane d="M4.500 0v9" w={1} /></ViewTool>
            <ViewTool><Pane d="M0 4.500h9" w={1} /></ViewTool>
            <ViewTool><Pane d="M0 1h9" w={2} /></ViewTool>
            <ViewTool><CloseDot s={16} /></ViewTool>
          </ViewBar>
          <Viewport><ElevationMesh /></Viewport>
        </ViewArea>
      </Body>
    </Window>
  );
}
